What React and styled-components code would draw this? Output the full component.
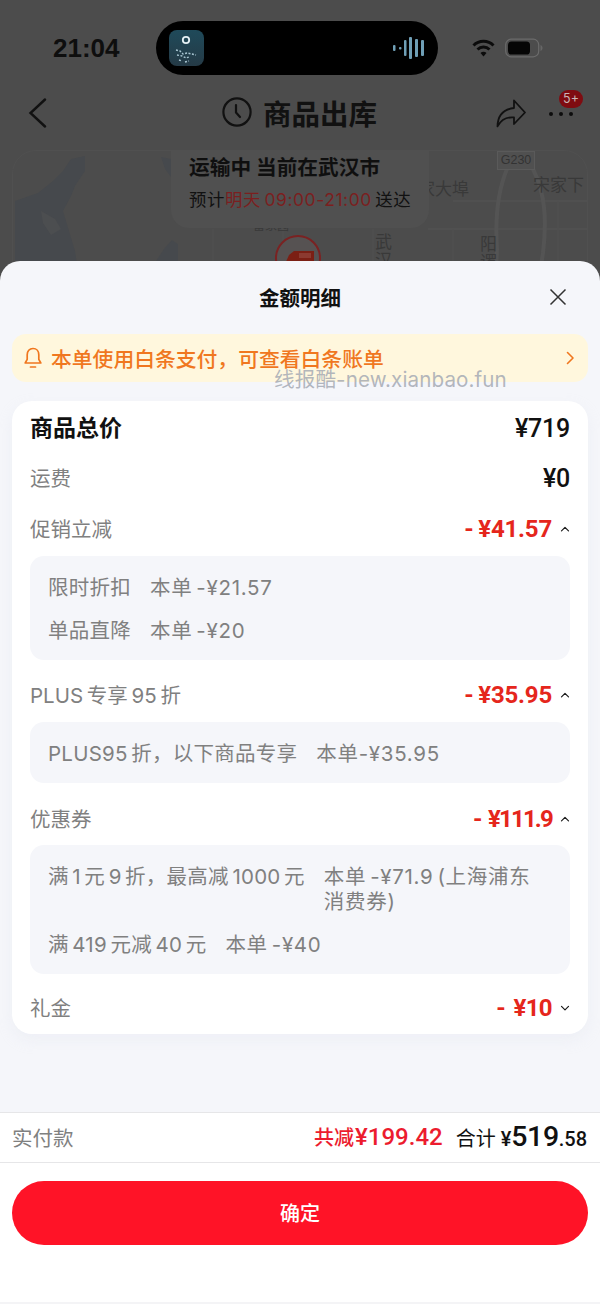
import React from "react";
import styled, { createGlobalStyle } from "styled-components";

const GlobalStyle = createGlobalStyle`
  html, body {
    margin: 0;
    padding: 0;
    background: #4c4c4c;
  }
  * {
    box-sizing: border-box;
  }
`;

const Page = styled.div`
  position: relative;
  width: 600px;
  height: 1304px;
  overflow: hidden;
  background: #4c4c4c;
  font-family: Inter, "Noto Sans CJK SC", sans-serif;
`;

const Top = styled.div`
  height: 261px;
  overflow: hidden;
`;

const StatusBar = styled.div`
  display: flex;
  align-items: center;
  height: 54px;
  margin-top: 21px;
  padding-left: 53px;
`;

const Clock = styled.div`
  width: 103px;
  font-family: "Liberation Sans", sans-serif;
  font-size: 26px;
  font-weight: 700;
  color: #0e0e0e;
`;

const Island = styled.div`
  display: flex;
  align-items: center;
  justify-content: space-between;
  width: 282px;
  height: 54px;
  padding: 0 13px;
  border-radius: 27px;
  background: #000;
`;

const StatusIcons = styled.div`
  display: flex;
  align-items: center;
  gap: 10px;
  margin-left: 34px;
`;

const Nav = styled.div`
  position: relative;
  display: flex;
  align-items: center;
  height: 60px;
  margin-top: 8px;
  padding: 0 28px;
`;

const NavTitle = styled.div`
  display: flex;
  align-items: center;
  gap: 11px;
  margin-left: 174px;
  margin-top: -2px;
  font-size: 28.5px;
  font-weight: 700;
  color: #111;
`;

const NavActions = styled.div`
  display: flex;
  align-items: center;
  margin-left: auto;
  gap: 23px;
  margin-right: -1px;
`;

const MoreButton = styled.div`
  position: relative;
  display: flex;
  gap: 6px;
  padding-top: 2px;
`;

const Dot = styled.span`
  width: 4px;
  height: 4px;
  border-radius: 50%;
  background: #0d0d0d;
`;

const Badge = styled.span`
  position: absolute;
  top: -20px;
  left: 10px;
  width: 24px;
  height: 18px;
  border-radius: 9px;
  background: #7f0c11;
  color: #c9b5b5;
  font-size: 12.5px;
  line-height: 18px;
  text-align: center;
`;

const MapCard = styled.div`
  position: relative;
  height: 140px;
  margin: 7px 12px 0;
  border: 1px solid #505050;
  border-radius: 24px 24px 0 0;
  overflow: hidden;
  background: #4c4c4c;
`;

const MapDrawing = styled.svg`
  position: absolute;
  top: 0;
  left: 0;
`;

const MapLabel = styled.span`
  position: absolute;
  left: ${(p) => p.$x}px;
  top: ${(p) => p.$y}px;
  width: ${(p) => (p.$vertical ? "20px" : "auto")};
  font-size: ${(p) => p.$size || 17}px;
  line-height: 1.05;
  color: #393939;
  white-space: ${(p) => (p.$vertical ? "normal" : "nowrap")};
`;

const RoadTag = styled.span`
  position: absolute;
  left: 484px;
  top: 0;
  width: 38px;
  height: 19px;
  border: 1px solid #5a5a5a;
  background: #505050;
  color: #333;
  font-family: "Liberation Sans", sans-serif;
  font-size: 12.5px;
  line-height: 17px;
  text-align: center;
`;

const StatusPanel = styled.div`
  position: absolute;
  left: 158px;
  top: -1px;
  width: 258px;
  height: 78px;
  padding: 4px 0 0 18px;
  border-radius: 0 0 18px 18px;
  background: #505050;
`;

const StatusTitle = styled.div`
  font-size: 20.7px;
  font-weight: 700;
  line-height: 28px;
  color: #0f0f0f;
  white-space: nowrap;
`;

const StatusLine = styled.div`
  margin-top: 4px;
  font-size: 17.4px;
  line-height: 28px;
  color: #111;
  white-space: nowrap;
  letter-spacing: 0.6px;
  word-spacing: -2px;

  em {
    font-style: normal;
    color: #7b1f1f;
  }
`;

const Truck = styled.div`
  position: absolute;
  left: 261px;
  top: 83px;
`;

const Sheet = styled.div`
  display: flex;
  flex-direction: column;
  height: 1043px;
  border-radius: 20px 20px 0 0;
  overflow: hidden;
  background: #f5f6fa;
`;

const SheetHeader = styled.div`
  position: relative;
  height: 73px;
  padding-top: 23px;
  font-size: 20.5px;
  font-weight: 700;
  line-height: 30px;
  color: #111;
  text-align: center;
`;

const CloseIcon = styled.svg`
  position: absolute;
  top: 27px;
  right: 33px;
`;

const Banner = styled.div`
  display: flex;
  align-items: center;
  height: 48px;
  margin: 0 12px;
  padding: 0 13px 0 12px;
  border-radius: 14px;
  background: #fff7dd;
  font-size: 20.8px;
  font-weight: 500;
  color: #f0771f;
`;

const BannerText = styled.span`
  flex: 1;
  margin-left: 9px;
`;

const Watermark = styled.div`
  position: absolute;
  left: 274px;
  top: 367px;
  font-size: 20.6px;
  line-height: 26px;
  letter-spacing: 0.1px;
  color: rgba(165, 170, 180, 0.85);
  white-space: nowrap;
`;

const Card = styled.div`
  margin: 19px 12px 0;
  padding: 14px 18px 13px;
  border-radius: 20px;
  background: #fff;
  box-shadow: 0 6px 14px rgba(220, 224, 235, 0.25);
`;

const Row = styled.div`
  display: flex;
  align-items: center;
  justify-content: space-between;
  height: 26px;
  margin-top: ${(p) => p.$top || 0}px;
  word-spacing: -2px;
`;

const RowLabel = styled.span`
  margin-top: ${(p) => (p.$strong ? "-5px" : "-2px")};
  font-size: ${(p) => (p.$strong ? "23px" : "20.5px")};
  font-weight: ${(p) => (p.$strong ? 700 : 400)};
  color: ${(p) => (p.$strong ? "#111" : "#808080")};
`;

const Amount = styled.span`
  font-family: Roboto, sans-serif;
  font-size: 25px;
  font-weight: 500;
  letter-spacing: -0.2px;
  color: #111;
`;

const Discount = styled.span`
  display: flex;
  align-items: center;
  gap: 7px;
  margin-right: -1px;
  font-family: Roboto, sans-serif;
  font-size: 24px;
  font-weight: 700;
  letter-spacing: ${(p) => p.$squeeze || -0.2}px;
  color: #e5261c;
  word-spacing: ${(p) => (p.$squeeze ? 3 : -1)}px;
`;

const Panel = styled.div`
  display: flex;
  flex-direction: column;
  gap: 18px;
  margin-top: ${(p) => p.$top || 14}px;
  padding: 18.5px 18px 17.5px;
  border-radius: 14px;
  background: #f5f6fa;
`;

const Detail = styled.div`
  display: flex;
  gap: 19px;
  font-size: 20.5px;
  line-height: 25px;
  color: #808080;
  letter-spacing: 0.25px;
  word-spacing: -2.5px;
`;

const DetailName = styled.span`
  flex: none;
`;

const DetailValue = styled.span`
  padding-right: 12px;
  letter-spacing: 0.7px;
`;

const Spacer = styled.div`
  flex: 1;
`;

const TotalBar = styled.div`
  display: flex;
  align-items: center;
  height: 51px;
  padding: 0 13px 2px 12px;
  border-top: 1px solid #e6e6e8;
  border-bottom: 1px solid #e6e6e8;
  background: #fff;
`;

const TotalLabel = styled.span`
  margin-right: auto;
  font-size: 20.5px;
  color: #808080;
`;

const Saved = styled.span`
  font-size: 20px;
  font-weight: 500;
  color: #ec1c2e;

  b {
    margin-left: 1px;
    font-family: Roboto, sans-serif;
    font-size: 24px;
    font-weight: 500;
  }
`;

const Sum = styled.span`
  display: flex;
  align-items: baseline;
  margin-left: 13px;
  font-size: 20px;
  color: #111;
`;

const SumYuan = styled.span`
  margin-left: 5px;
  font-family: Roboto, sans-serif;
  font-size: 20px;
  font-weight: 500;
`;

const SumMain = styled.span`
  font-family: Roboto, sans-serif;
  font-size: 28.5px;
  font-weight: 500;
  letter-spacing: -0.4px;
`;

const SumCents = styled.span`
  font-family: Roboto, sans-serif;
  font-size: 20px;
  font-weight: 500;
`;

const Footer = styled.div`
  height: 141px;
  padding: 18px 12px 0;
  border-bottom: 2px solid #f4f4f6;
  background: #fff;
`;

const ConfirmButton = styled.div`
  height: 64px;
  border-radius: 32px;
  background: #ff1327;
  color: #fff;
  font-size: 20px;
  font-weight: 500;
  line-height: 67px;
  text-align: center;
`;

const Chevron = ({ up }) => (
  <svg width="12" height="8" viewBox="0 0 12 8" fill="none">
    <path
      d={up ? "M2.500 5.800L6 2.300l3.500 3.500" : "M2.500 2.300L6 5.800l3.500-3.500"}
      stroke="#1a1a1a"
      strokeWidth="1.200"
      strokeLinecap="round"
      strokeLinejoin="round"
    />
  </svg>
);

const AppIcon = () => (
  <svg width="35" height="36" viewBox="0 0 35 36">
    <defs>
      <linearGradient id="appBg" x1="0" y1="0" x2="0" y2="1">
        <stop offset="0" stopColor="#1f4a5a" />
        <stop offset="1" stopColor="#253a46" />
      </linearGradient>
    </defs>
    <rect width="35" height="36" rx="8" fill="url(#appBg)" />
    <circle cx="17" cy="10" r="3.200" fill="none" stroke="#e4f0f4" strokeWidth="1.800" />
    <path
      d="M7 20l4 1 3 3 4-1 5 1 4 1M8 25l5 1 4 2 3-1M10 30l3 1M16 32l4-1"
      stroke="#a9c6d2"
      strokeWidth="1.400"
      strokeDasharray="2 1.500"
      fill="none"
    />
  </svg>
);

const WaveForm = () => (
  <svg width="32" height="22" viewBox="0 0 32 22" fill="#6f9fb6">
    <rect x="0" y="8" width="2.500" height="6" rx="1" />
    <rect x="6" y="10" width="2.500" height="2.500" rx="1" />
    <rect x="11" y="3" width="2.500" height="16" rx="1" />
    <rect x="16" y="0" width="3" height="22" rx="1" />
    <rect x="22" y="2" width="3" height="18" rx="1" />
    <rect x="28" y="3" width="3" height="16" rx="1" />
  </svg>
);

const WifiIcon = () => (
  <svg width="23" height="18" viewBox="0 0 23 18" fill="none" stroke="#0b0b0b" strokeWidth="3">
    <path d="M1.500 6.500a14 14 0 0 1 20 0" />
    <path d="M5.500 10.500a8.600 8.600 0 0 1 12 0" />
    <path d="M11.500 17.500l-3-3.400a4.200 4.200 0 0 1 6 0z" fill="#0b0b0b" stroke="none" />
  </svg>
);

const BatteryIcon = () => (
  <svg width="38" height="20" viewBox="0 0 38 20" fill="none">
    <rect x="0.700" y="1.200" width="33" height="17.600" rx="5.500" stroke="#6b6b6b" strokeWidth="1.200" />
    <rect x="3" y="3.500" width="22" height="13" rx="3.600" fill="#050505" />
    <path d="M35.500 7v6c1.400-.5 2-1.600 2-3s-.6-2.500-2-3z" fill="#666" />
  </svg>
);

const BackIcon = () => (
  <svg width="20" height="30" viewBox="0 0 20 30" fill="none">
    <path d="M17 1.500L2.500 15 17 28.500" stroke="#111" strokeWidth="2.400" strokeLinecap="round" />
  </svg>
);

const ClockIcon = () => (
  <svg width="30" height="30" viewBox="0 0 30 30" fill="none" stroke="#111" strokeWidth="2.200">
    <circle cx="15" cy="15" r="13.600" />
    <path d="M14 8v7.500l4 4.500" strokeLinecap="round" strokeLinejoin="round" />
  </svg>
);

const ShareIcon = () => (
  <svg width="30" height="29" viewBox="0 0 30 29" fill="none">
    <path
      d="M18 1.500L29 13.500 18 25v-6.600c-7-.6-12.500 1.600-16.500 9 .2-10 5-17 16.500-18.400z"
      stroke="#111"
      strokeWidth="1.800"
      strokeLinejoin="round"
    />
  </svg>
);

const BellIcon = () => (
  <svg width="18" height="22" viewBox="0 0 18 22" fill="none" stroke="#f0771f" strokeWidth="1.700">
    <path d="M9 1.500c-3.600 0-5.800 2.700-5.800 6.200v4.600L1.200 16h15.600l-2-3.700V7.700C14.800 4.200 12.600 1.500 9 1.500z" strokeLinejoin="round" />
    <path d="M6.500 20h5" strokeLinecap="round" />
  </svg>
);

const BannerArrow = () => (
  <svg width="10" height="16" viewBox="0 0 10 16" fill="none">
    <path d="M2.500 2.500L8 8l-5.500 5.500" stroke="#f0771f" strokeWidth="1.600" strokeLinecap="round" strokeLinejoin="round" />
  </svg>
);

const TruckMarker = () => (
  <svg width="48" height="30" viewBox="0 0 48 30" fill="none">
    <circle cx="24" cy="24" r="22" fill="#565252" stroke="#7a2222" strokeWidth="2" />
    <path d="M11 30l4-9 5-4h20v13z" fill="#7b1f14" />
    <rect x="25" y="19" width="12" height="5" fill="#8c3a30" />
  </svg>
);

const MapBackground = () => (
  <MapDrawing width="576" height="140" viewBox="0 0 576 140" fill="none">
    <path
      d="M2 50l23-8 15-12 10-10 8-12 14-3v15l-10 15-4 10-8 15 12 40 6 40H2z"
      fill="#46494d"
    />
    <path d="M28 60l14 8 6 10-10 6-8-12z" fill="#4c4e50" />
    <path d="M148 6l10 2v18l-6-8z" fill="#46494d" />
    <path d="M143 110l8-12 8-9 6 4v47h-22z" fill="#46494d" />
    <path d="M415 78h160M440 50h135" stroke="#505050" strokeWidth="2" />
    <path d="M200 78v62M270 78v62M360 78v62M440 78v62M545 50v90" stroke="#4f4f4f" strokeWidth="1.500" />
    <path
      d="M494 18c-10 24-12 50-10 80l-2 42M520 18c12 24 14 50 10 84l-6 38"
      stroke="#545454"
      strokeWidth="4"
    />
  </MapDrawing>
);

const App = () => (
  <Page>
    <GlobalStyle />
    <Top>
      <StatusBar>
        <Clock>21:04</Clock>
        <Island>
          <AppIcon />
          <WaveForm />
        </Island>
        <StatusIcons>
          <WifiIcon />
          <BatteryIcon />
        </StatusIcons>
      </StatusBar>
      <Nav>
        <BackIcon />
        <NavTitle>
          <ClockIcon />
          商品出库
        </NavTitle>
        <NavActions>
          <ShareIcon />
          <MoreButton>
            <Dot />
            <Dot />
            <Dot />
            <Badge>5+</Badge>
          </MoreButton>
        </NavActions>
      </Nav>
      <MapCard>
        <MapBackground />
        <RoadTag>G230</RoadTag>
        <MapLabel $x={405} $y={30}>家大埠</MapLabel>
        <MapLabel $x={520} $y={26} $size={17}>宋家下</MapLabel>
        <MapLabel $x={240} $y={69} $size={12}>雷家园</MapLabel>
        <MapLabel $x={362} $y={83} $vertical>武汉</MapLabel>
        <MapLabel $x={467} $y={85} $vertical>阳逻</MapLabel>
        <StatusPanel>
          <StatusTitle>运输中 当前在武汉市</StatusTitle>
          <StatusLine>
            预计<em>明天 09:00-21:00</em> 送达
          </StatusLine>
        </StatusPanel>
        <Truck>
          <TruckMarker />
        </Truck>
      </MapCard>
    </Top>
    <Sheet>
      <SheetHeader>
        金额明细
        <CloseIcon width="18" height="18" viewBox="0 0 18 18" fill="none">
          <path d="M1.500 1.500l15 15M16.500 1.500l-15 15" stroke="#333" strokeWidth="1.500" />
        </CloseIcon>
      </SheetHeader>
      <Banner>
        <BellIcon />
        <BannerText>本单使用白条支付，可查看白条账单</BannerText>
        <BannerArrow />
      </Banner>
      <Card>
        <Row>
          <RowLabel $strong>商品总价</RowLabel>
          <Amount>¥719</Amount>
        </Row>
        <Row $top={24}>
          <RowLabel>运费</RowLabel>
          <Amount>¥0</Amount>
        </Row>
        <Row $top={25}>
          <RowLabel>促销立减</RowLabel>
          <Discount>
            <span>- ¥41.57</span>
            <Chevron up />
          </Discount>
        </Row>
        <Panel>
          <Detail>
            <DetailName>限时折扣</DetailName>
            <DetailValue>本单 -¥21.57</DetailValue>
          </Detail>
          <Detail>
            <DetailName>单品直降</DetailName>
            <DetailValue>本单 -¥20</DetailValue>
          </Detail>
        </Panel>
        <Row $top={22}>
          <RowLabel>PLUS 专享 95 折</RowLabel>
          <Discount>
            <span>- ¥35.95</span>
            <Chevron up />
          </Discount>
        </Row>
        <Panel>
          <Detail>
            <DetailName>PLUS95 折，以下商品专享</DetailName>
            <DetailValue>本单-¥35.95</DetailValue>
          </Detail>
        </Panel>
        <Row $top={23}>
          <RowLabel>优惠券</RowLabel>
          <Discount $squeeze={-1.8}>
            <span>- ¥111.9</span>
            <Chevron up />
          </Discount>
        </Row>
        <Panel $top={13}>
          <Detail>
            <DetailName>满 1 元 9 折，最高减 1000 元</DetailName>
            <DetailValue>本单 -¥71.9 (上海浦东消费券)</DetailValue>
          </Detail>
          <Detail>
            <DetailName>满 419 元减 40 元</DetailName>
            <DetailValue>本单 -¥40</DetailValue>
          </Detail>
        </Panel>
        <Row $top={21}>
          <RowLabel>礼金</RowLabel>
          <Discount $squeeze={-0.6}>
            <span>- ¥10</span>
            <Chevron />
          </Discount>
        </Row>
      </Card>
      <Spacer />
      <TotalBar>
        <TotalLabel>实付款</TotalLabel>
        <Saved>
          共减<b>¥199.42</b>
        </Saved>
        <Sum>
          合计
          <SumYuan>¥</SumYuan>
          <SumMain>519</SumMain>
          <SumCents>.58</SumCents>
        </Sum>
      </TotalBar>
      <Footer>
        <ConfirmButton>确定</ConfirmButton>
      </Footer>
    </Sheet>
    <Watermark>线报酷-new.xianbao.fun</Watermark>
  </Page>
);

export default App;
